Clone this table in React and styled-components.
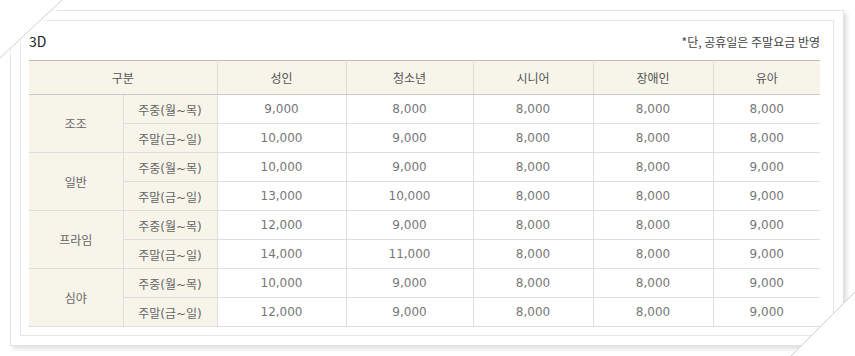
import styled, { createGlobalStyle } from 'styled-components';

const GlobalStyle = createGlobalStyle`
  html, body {
    margin: 0;
    padding: 0;
    background: #fff;
  }
  body {
    font-family: 'DejaVu Sans', 'Noto Sans CJK KR', sans-serif;
  }
`;

const Page = styled.div`
  width: 855px;
  height: 356px;
  position: relative;
  overflow: hidden;
  background: #fff;
`;

const Frame = styled.div`
  position: relative;
  margin: 10px 0 0 10px;
  width: 834px;
  height: 336px;
  border: 1px solid #e2e2e2;
  background: #fff;
  box-shadow: 3px 3px 4px rgba(0, 0, 0, 0.12);
  padding: 9px;
  box-sizing: border-box;
`;

const Panel = styled.div`
  height: 100%;
  box-sizing: border-box;
  border: 1px solid #e6e6e6;
  padding: 0 13px 0 8px;
`;

const TitleRow = styled.div`
  height: 39px;
  display: flex;
  align-items: flex-end;
  justify-content: space-between;
  padding-bottom: 9px;
  box-sizing: border-box;
`;

const Title = styled.h3`
  margin: 0;
  font-family: 'Noto Sans CJK KR', sans-serif;
  font-size: 14px;
  font-weight: normal;
  color: #222;
  line-height: 20px;
`;

const Notice = styled.span`
  font-size: 12px;
  color: #444;
  line-height: 18px;
  font-family: 'Noto Sans CJK KR', sans-serif;
`;

const Table = styled.table`
  width: 791px;
  border-collapse: collapse;
  table-layout: fixed;
  font-size: 12px;
  color: #777;
  border-top: 1px solid #bdbdbd;
`;

const HeadCell = styled.th`
  height: 33px;
  padding: 0;
  font-weight: normal;
  color: #555;
  background: #f7f4ea;
  border-left: 1px solid #e0ddd4;
  border-bottom: 1px solid #c9c9c9;
  font-family: 'Noto Sans CJK KR', sans-serif;
  font-size: 12px;
  &:first-child {
    border-left: none;
  }
`;

const Cell = styled.td`
  height: 28px;
  padding: 0;
  text-align: center;
  border: 1px solid #dedede;
  border-top: none;
  background: ${(p) => (p.$label ? '#f7f4ea' : '#fff')};
  color: ${(p) => (p.$label ? '#666' : '#777')};
  &:last-child {
    border-right: none;
  }
  ${(p) => p.$group && "border-left: none; font-family: 'Noto Sans CJK KR', sans-serif;"}
`;

const Corner = styled.svg`
  position: absolute;
  pointer-events: none;
`;

const columns = [94, 94, 129, 127, 120, 120, 107];
const headers = ['성인', '청소년', '시니어', '장애인', '유아'];

const rows = [
  { name: '조조', prices: [['9,000', '8,000', '8,000', '8,000', '8,000'], ['10,000', '9,000', '8,000', '8,000', '8,000']] },
  { name: '일반', prices: [['10,000', '9,000', '8,000', '8,000', '9,000'], ['13,000', '10,000', '8,000', '8,000', '9,000']] },
  { name: '프라임', prices: [['12,000', '9,000', '8,000', '8,000', '9,000'], ['14,000', '11,000', '8,000', '8,000', '9,000']] },
  { name: '심야', prices: [['10,000', '9,000', '8,000', '8,000', '9,000'], ['12,000', '9,000', '8,000', '8,000', '9,000']] },
];

const days = ['주중(월~목)', '주말(금~일)'];

export default function App() {
  return (
    <Page>
      <GlobalStyle />
      <Frame>
        <Panel>
          <TitleRow>
            <Title>3D</Title>
            <Notice>*단, 공휴일은 주말요금 반영</Notice>
          </TitleRow>
          <Table>
            <colgroup>
              {columns.map((w, i) => (
                <col key={i} style={{ width: w }} />
              ))}
            </colgroup>
            <thead>
              <tr>
                <HeadCell colSpan={2}>구분</HeadCell>
                {headers.map((h) => (
                  <HeadCell key={h}>{h}</HeadCell>
                ))}
              </tr>
            </thead>
            <tbody>
              {rows.map((r) =>
                r.prices.map((line, i) => (
                  <tr key={r.name + i}>
                    {i === 0 && (
                      <Cell $label $group rowSpan={2}>
                        {r.name}
                      </Cell>
                    )}
                    <Cell $label>{days[i]}</Cell>
                    {line.map((v, k) => (
                      <Cell key={k}>{v}</Cell>
                    ))}
                  </tr>
                ))
              )}
            </tbody>
          </Table>
        </Panel>
      </Frame>
      <Corner width="70" height="66" viewBox="0 0 70 66" style={{ left: 0, top: 0 }}>
        <defs>
          <linearGradient id="tlShade" x1="0" y1="0" x2="1" y2="1">
            <stop offset="0" stopColor="#ffffff" />
            <stop offset="0.5" stopColor="#ffffff" />
            <stop offset="1" stopColor="#e8e8e8" stopOpacity="0" />
          </linearGradient>
        </defs>
        <polygon points="0,0 62,0 0,58" fill="#fff" />
        <polygon points="62,0 0,58 0,64 68,0" fill="url(#tlShade)" opacity="0.6" />
        <line x1="62" y1="0" x2="0" y2="58" stroke="#cfcfcf" strokeWidth="1" />
      </Corner>
      <Corner width="70" height="70" viewBox="0 0 70 70" style={{ right: 0, bottom: 0 }}>
        <polygon points="70,70 70,6 6,70" fill="#fff" />
        <line x1="70" y1="6" x2="6" y2="70" stroke="#cfcfcf" strokeWidth="1" />
      </Corner>
    </Page>
  );
}
